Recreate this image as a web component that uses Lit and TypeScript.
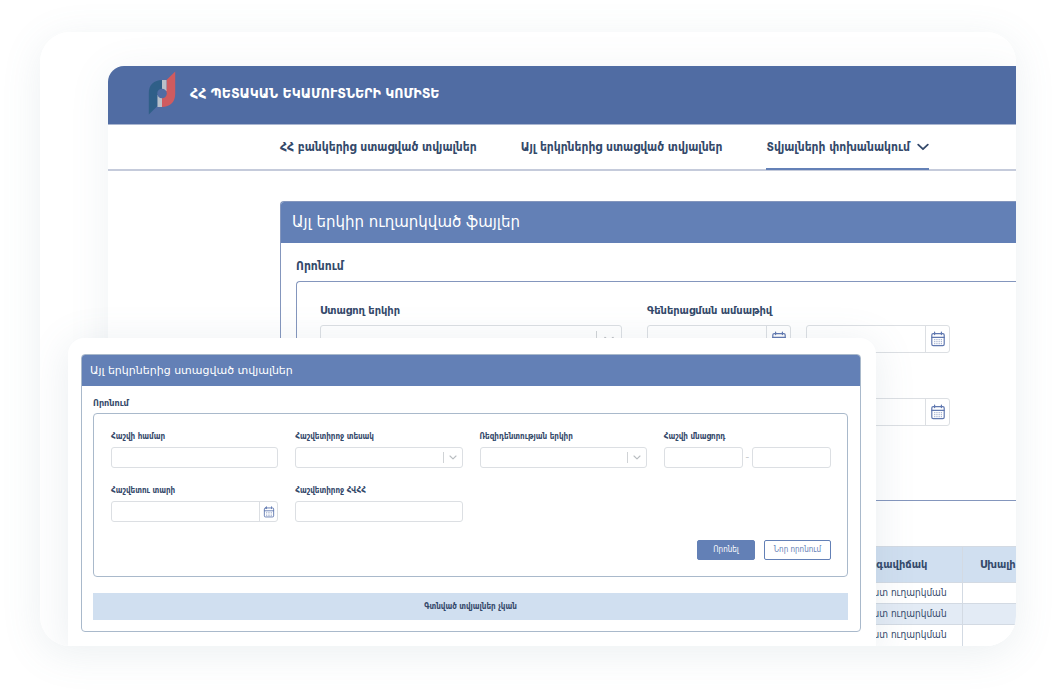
import { LitElement, html, css, svg, nothing } from "lit";
import { customElement } from "lit/decorators.js";
import { classMap } from "lit/directives/class-map.js";

const chevron = html`<svg class="chevron" viewBox="0 0 12 8" aria-hidden="true">
  <path d="M1.2 1.6 6 6.2l4.8-4.6" fill="none" stroke="currentColor" stroke-width="1.8" stroke-linecap="round" stroke-linejoin="round" />
</svg>`;

const calendar = html`<svg class="calendar" viewBox="0 0 16 16" aria-hidden="true">
  <g fill="none" stroke="currentColor" stroke-width="1.2" stroke-linecap="round">
    <rect x="1.8" y="2.6" width="12.4" height="12" rx="1.4" />
    <path d="M1.8 6.4h12.4M4.6 1v2.6M11.4 1v2.6" />
  </g>
  <g fill="currentColor" opacity="0.75">
    ${[8.2, 10.2, 12.2].map((y) => [4.2, 6.4, 8.6, 10.8].map((x) => svg`<rect x=${x} y=${y} width="1.1" height="1" />`))}
  </g>
</svg>`;

const logo = html`<svg class="logo" viewBox="0 0 28 44" aria-hidden="true">
  <path d="M14 9C6 9 0.800 14 0.800 22V43.500L9.500 35V26H14Z" fill="#2f5f88" />
  <path d="M14 36C22 36 27.200 31 27.200 23V0.500L18.500 9V18H14Z" fill="#cf5b5f" />
  <path d="M9.500 24H14V36H9.500ZM14 9H18.500V20H14Z" fill="#b9c1c9" />
  <circle cx="14" cy="22.500" r="4.800" fill="#506ca3" />
</svg>`;

@customElement("app-root")
export class AppRoot extends LitElement {
  static styles = css`
    :host {
      display: block;
      box-sizing: border-box;
      min-height: 100vh;
      padding: 32px 40px 48px;
      background: #fff;
      color: #34496a;
      font-family: "DejaVu Sans Condensed", "DejaVu Sans", sans-serif;
      font-size: 12px;
      line-height: 16px;
    }
    *, *::before, *::after { box-sizing: border-box; }
    h1, h2, h3 { margin: 0; }
    .card {
      position: relative;
      overflow: hidden;
      padding: 34px 0 0 68px;
      border-radius: 30px;
      background: #fff;
    }
    .glow { border-radius: 30px; box-shadow: 0 8px 40px rgba(96, 130, 150, 0.12); }
    .site { border-radius: 16px 0 0 0; box-shadow: 0 6px 40px rgba(96, 130, 150, 0.1); }
    .masthead {
      display: flex;
      align-items: center;
      gap: 14px;
      height: 58px;
      padding: 0 40px 4px;
      border-radius: 16px 0 0 0;
      background: #506ca3;
      color: #fff;
    }
    .logo { width: 28px; height: 44px; }
    .masthead h1 { font-size: 14px; line-height: 20px; font-weight: 700; }
    .nav {
      display: flex;
      gap: 44px;
      height: 47px;
      padding-left: 172px;
      border-top: 1px solid #aab6d0;
      border-bottom: 2px solid #c5cbdb;
    }
    .nav a {
      display: flex;
      align-items: center;
      gap: 7px;
      height: 45px;
      border-bottom: 2px solid transparent;
      color: inherit;
      font-weight: 700;
      text-decoration: none;
      white-space: nowrap;
    }
    .nav a.current { border-color: #6481b7; }
    .nav .chevron { width: 12px; height: 8px; }
    .content { padding: 30px 0 0 172px; }
    .panel { border: 1px solid #8496bd; border-radius: 4px; background: #fff; }
    .content .panel { border-right: 0; border-bottom: 0; border-radius: 4px 0 0 0; }
    .panel-title {
      padding: 0 11px;
      border-radius: 3px 3px 0 0;
      background: #6380b6;
      color: #fff;
      font-family: "DejaVu Sans", sans-serif;
      font-size: 15px;
      line-height: 41px;
      font-weight: 400;
    }
    .content .panel-title { border-radius: 3px 0 0 0; }
    .panel-body { padding: 15px 0 0 15px; }
    .panel-body h3 { font-size: 12px; line-height: 16px; }
    .search {
      margin-top: 7px;
      padding: 21px 24px 0 23px;
      border: 1px solid #8496bd;
      border-radius: 4px;
    }
    .content .search { height: 220px; border-right: 0; border-radius: 4px 0 0 4px; }
    .fields { display: grid; grid-template-columns: 302px 303px; gap: 23px 25px; }
    .field { min-width: 0; }
    .field label { display: block; margin-bottom: 6px; font-weight: 700; white-space: nowrap; }
    .content .field label { font-size: 11px; }
    .row { display: flex; align-items: center; gap: 15px; }
    .control {
      position: relative;
      display: flex;
      flex: 1;
      min-width: 0;
      height: 28px;
      border: 1px solid #dcdfe3;
      border-radius: 3px;
      background: #fff;
    }
    .control input, .control select {
      flex: 1;
      width: 100%;
      min-width: 0;
      padding: 0 6px;
      border: 0;
      background: none;
      color: inherit;
      font: inherit;
      appearance: none;
      outline-offset: -1px;
    }
    .control button {
      display: grid;
      place-items: center;
      width: 24px;
      padding: 0;
      border: 0;
      border-left: 1px solid #dcdfe3;
      background: none;
      color: #6078b0;
    }
    .calendar { width: 16px; height: 16px; }
    .arrow {
      position: absolute;
      top: 5px;
      right: 0;
      bottom: 5px;
      display: grid;
      place-items: center;
      width: 25px;
      border-left: 1px solid #d0d3d6;
      color: #b9bdc1;
      pointer-events: none;
    }
    .arrow .chevron { width: 10px; height: 7px; }
    .grid {
      width: 800px;
      margin-top: 45px;
      border-collapse: collapse;
      table-layout: fixed;
      text-align: center;
    }
    .grid .state { width: 144px; }
    .grid .error { width: 133px; }
    .grid th, .grid td { padding: 0; border: 1px solid #d3dae3; white-space: nowrap; }
    .grid th { height: 36px; background: #d0dff0; font-size: 11px; }
    .grid th.error { padding-left: 17px; text-align: left; }
    .grid td { height: 21px; font-size: 10px; line-height: 20px; }
    .grid tbody tr:nth-child(even) { background: #e3ebf5; }
    .grid tbody tr:last-child td { border-bottom: 0; }
    .results { overflow: hidden; }

    .sheet {
      position: absolute;
      top: 306px;
      right: 140px;
      bottom: 0;
      left: 28px;
      padding: 16px 15px 0 13px;
      border-radius: 16px 16px 0 0;
      background: #fff;
      box-shadow: 0 6px 40px rgba(96, 130, 150, 0.14);
      font-size: 8px;
      line-height: 12px;
    }
    .sheet .panel { border-color: #a9b9cb; padding-bottom: 11px; }
    .sheet .panel-title { padding: 0 8px; font-size: 11px; line-height: 31px; }
    .sheet .panel-body { padding: 11px 12px 0 11px; }
    .sheet .panel-body h3 { font-size: 9px; line-height: 12px; }
    .sheet .search { margin-top: 4px; padding: 17px 16px 16px 17px; border-color: #a9b9cb; }
    .sheet .fields { grid-template-columns: repeat(4, minmax(0, 1fr)); gap: 17px; }
    .sheet .field label { margin-bottom: 4px; }
    .sheet .row { gap: 3px; color: #b5b8bc; }
    .sheet .control { height: 21px; }
    .sheet .control button { width: 18px; }
    .sheet .calendar { width: 12px; height: 12px; }
    .sheet .arrow { top: 4px; bottom: 4px; width: 19px; }
    .sheet .arrow .chevron { width: 8px; height: 5px; }
    .actions { display: flex; justify-content: flex-end; gap: 9px; margin-top: 18px; }
    .btn {
      height: 20px;
      padding: 0 9px;
      border: 1px solid #6380b6;
      border-radius: 2px;
      background: #fff;
      color: #6380b6;
      font: inherit;
    }
    .btn.primary { padding: 0 15px; background: #6380b6; color: #fff; }
    .empty {
      margin: 16px 0 0;
      background: #d0dff0;
      font-weight: 700;
      line-height: 27px;
      text-align: center;
    }
  `;

  private text(id: string, label: string | typeof nothing = nothing) {
    return html`<div class="control"><input id=${id} type="text" aria-label=${label} /></div>`;
  }

  private date(id: string, label: string | typeof nothing = nothing) {
    return html`<div class="control">
      <input id=${id} type="text" aria-label=${label} />
      <button type="button" aria-label="Օրացույց">${calendar}</button>
    </div>`;
  }

  private select(id: string) {
    return html`<div class="control">
      <select id=${id}><option></option></select>
      <span class="arrow">${chevron}</span>
    </div>`;
  }

  private field(id: string, label: string, control: unknown) {
    return html`<div class="field"><label for=${id}>${label}</label><div class="row">${control}</div></div>`;
  }

  private navItem(label: string, current = false) {
    return html`<a href="#" class=${classMap({ current })}>${label}${current ? chevron : nothing}</a>`;
  }

  render() {
    return html`
      <div class="glow">
        <div class="card">
          <div class="site">
            <header class="masthead">${logo}<h1>ՀՀ ՊԵՏԱԿԱՆ ԵԿԱՄՈՒՏՆԵՐԻ ԿՈՄԻՏԵ</h1></header>
            <nav class="nav">
              ${this.navItem("ՀՀ բանկերից ստացված տվյալներ")}
              ${this.navItem("Այլ երկրներից ստացված տվյալներ")}
              ${this.navItem("Տվյալների փոխանակում", true)}
            </nav>
            <main class="content">
              <section class="panel">
                <h2 class="panel-title">Այլ երկիր ուղարկված ֆայլեր</h2>
                <div class="panel-body">
                  <h3>Որոնում</h3>
                  <form class="search">
                    <div class="fields">
                      ${this.field("country", "Ստացող երկիր", this.select("country"))}
                      ${this.field("gen-from", "Գեներացման ամսաթիվ", [this.date("gen-from"), this.date("gen-to", "Գեներացման ամսաթիվ")])}
                      ${this.field("state", "Կարգավիճակ", this.select("state"))}
                      ${this.field("sent-from", "Ուղարկման", [this.date("sent-from"), this.date("sent-to", "Ուղարկման")])}
                    </div>
                  </form>
                  <div class="results">
                    <table class="grid">
                      <thead><tr><th>Երկիր</th><th class="state">Կարգավիճակ</th><th class="error">Սխալի</th></tr></thead>
                      <tbody>
                        ${[1, 2, 3].map(() => html`<tr><td></td><td>Պատրաստ ուղարկման</td><td></td></tr>`)}
                      </tbody>
                    </table>
                  </div>
                </div>
              </section>
            </main>
          </div>

          <aside class="sheet">
            <section class="panel">
              <h2 class="panel-title">Այլ երկրներից ստացված տվյալներ</h2>
              <div class="panel-body">
                <h3>Որոնում</h3>
                <form class="search">
                  <div class="fields">
                    ${this.field("number", "Հաշվի համար", this.text("number"))}
                    ${this.field("kind", "Հաշվետիրոջ տեսակ", this.select("kind"))}
                    ${this.field("residence", "Ռեզիդենտության երկիր", this.select("residence"))}
                    ${this.field("min", "Հաշվի մնացորդ", [this.text("min"), html`<span>–</span>`, this.text("max", "Հաշվի մնացորդ")])}
                    ${this.field("year", "Հաշվետու տարի", this.date("year"))}
                    ${this.field("tin", "Հաշվետիրոջ ՀՎՀՀ", this.text("tin"))}
                  </div>
                  <div class="actions">
                    <button type="button" class="btn primary">Որոնել</button>
                    <button type="button" class="btn">Նոր որոնում</button>
                  </div>
                </form>
                <p class="empty">Գտնված տվյալներ չկան</p>
              </div>
            </section>
          </aside>
        </div>
      </div>
    `;
  }
}
